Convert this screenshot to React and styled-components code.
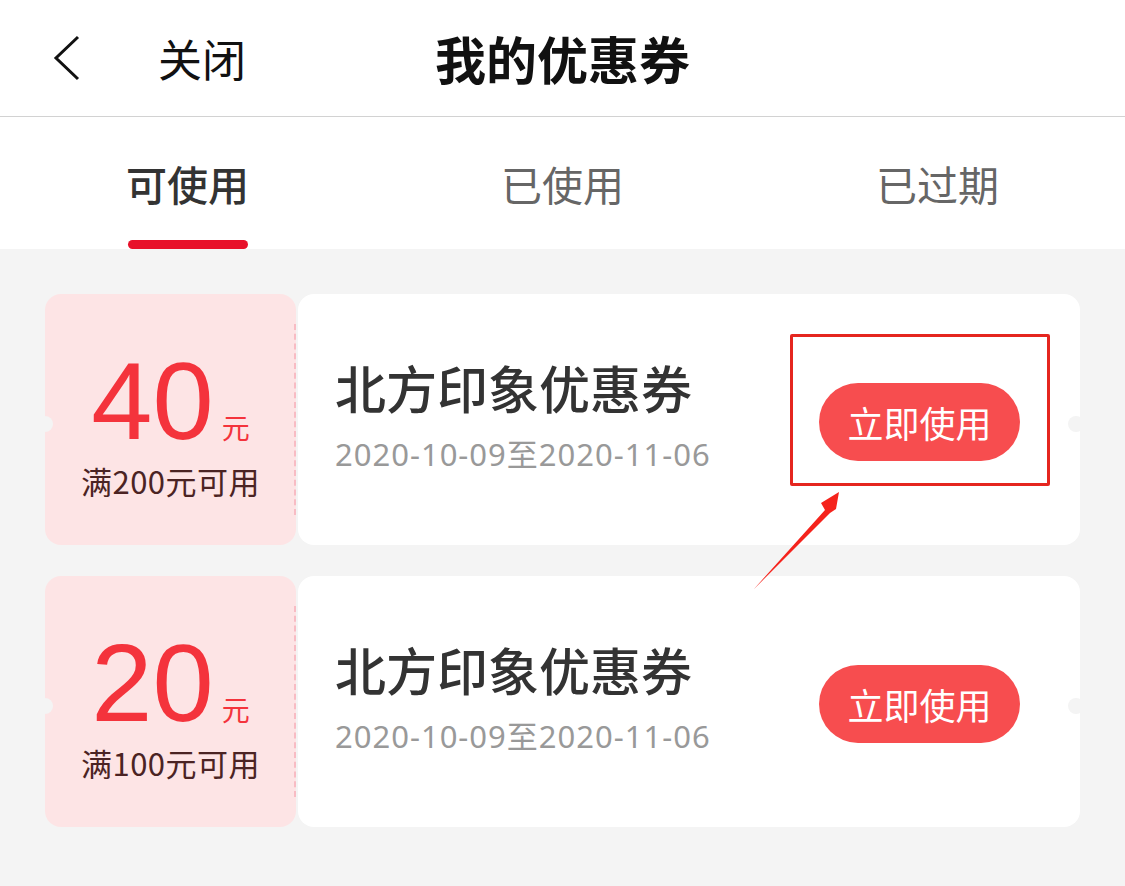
import React from "react";
import styled, { createGlobalStyle } from "styled-components";

const GlobalStyle = createGlobalStyle`
  html, body {
    margin: 0;
    padding: 0;
    background: #f4f4f4;
  }
  body {
    font-family: "Noto Sans CJK SC", "Noto Sans", sans-serif;
  }
`;

const Page = styled.div`
  width: 1125px;
  min-height: 886px;
  background: #f4f4f4;
`;

const Header = styled.div`
  height: 116px;
  display: grid;
  grid-template-columns: 1fr auto 1fr;
  align-items: center;
  background: #fff;
  border-bottom: 1px solid #d2d2d2;
`;

const HeaderLeft = styled.div`
  display: flex;
  align-items: center;
  padding-left: 52px;
  gap: 76px;
`;

const BackIcon = styled.svg`
  width: 30px;
  height: 50px;
  display: block;
`;

const CloseText = styled.span`
  font-size: 44px;
  color: #111;
  line-height: 1;
`;

const Title = styled.h1`
  margin: 0;
  font-size: 51px;
  font-weight: 700;
  color: #111;
  line-height: 1;
`;

const Tabs = styled.div`
  height: 132px;
  display: grid;
  grid-template-columns: repeat(3, 1fr);
  background: #fff;
`;

const Tab = styled.div`
  display: flex;
  flex-direction: column;
  align-items: center;
  justify-content: flex-end;
`;

const TabLabel = styled.span`
  font-size: 41px;
  line-height: 1;
  color: ${(p) => (p.$active ? "#333" : "#666")};
  font-weight: ${(p) => (p.$active ? 500 : 400)};
  margin-bottom: 36px;
`;

const Indicator = styled.div`
  width: 120px;
  height: 9px;
  border-radius: 5px;
  background: ${(p) => (p.$active ? "#e8112a" : "transparent")};
`;

const List = styled.div`
  padding: 45px 45px 40px;
  display: flex;
  flex-direction: column;
  gap: 31px;
`;

const Coupon = styled.div`
  position: relative;
  height: 251px;
  display: flex;
  gap: 2px;
`;

const Stub = styled.div`
  position: relative;
  width: 251px;
  flex-shrink: 0;
  background: #fde4e5;
  border-radius: 16px;
  display: flex;
  flex-direction: column;
  align-items: center;
  justify-content: center;
  padding-top: 3px;
  box-sizing: border-box;

  &::before {
    content: "";
    position: absolute;
    left: -8px;
    top: 50%;
    width: 16px;
    height: 16px;
    margin-top: -4px;
    border-radius: 50%;
    background: #f4f4f4;
  }

  &::after {
    content: "";
    position: absolute;
    right: 0;
    top: 30px;
    bottom: 30px;
    border-right: 2px dashed #f8bcc4;
  }
`;

const Amount = styled.div`
  display: flex;
  align-items: baseline;
  color: #f4333c;
  line-height: 1;
`;

const Value = styled.span`
  font-family: "Liberation Sans", "Noto Sans", sans-serif;
  font-size: 110px;
  line-height: 1;
`;

const Unit = styled.span`
  font-size: 28px;
  margin-left: 8px;
`;

const Condition = styled.div`
  font-size: 31px;
  letter-spacing: 0.5px;
  color: #4b2323;
  line-height: 1;
  margin-top: 9px;
`;

const Body = styled.div`
  position: relative;
  flex: 1;
  background: #fff;
  border-radius: 16px;
  display: flex;
  align-items: center;
  justify-content: space-between;
  padding: 0 60px 0 37px;

  &::before {
    content: "";
    position: absolute;
    right: -4px;
    top: 50%;
    width: 16px;
    height: 16px;
    margin-top: -4px;
    border-radius: 50%;
    background: #f4f4f4;
  }
`;

const Info = styled.div`
  display: flex;
  flex-direction: column;
  gap: 26px;
  padding-bottom: 8px;
`;

const CouponName = styled.div`
  font-size: 51px;
  font-weight: 500;
  color: #333;
  line-height: 1;
`;

const Dates = styled.div`
  font-family: "Noto Sans", "Noto Sans CJK SC", sans-serif;
  font-size: 31px;
  letter-spacing: 1px;
  color: #999;
  line-height: 1;
`;

const UseButton = styled.button`
  width: 201px;
  height: 78px;
  border: none;
  border-radius: 39px;
  background: #f74d4f;
  color: #fff;
  font-family: inherit;
  font-size: 36px;
  padding: 0;
  margin-top: 4px;
`;

const Highlight = styled.div`
  position: absolute;
  z-index: 2;
  left: 745px;
  top: 40px;
  width: 260px;
  height: 152px;
  border: 3px solid #e5261f;
  border-radius: 2px;
  box-sizing: border-box;
  pointer-events: none;
`;

const Pointer = styled.svg`
  position: absolute;
  z-index: 2;
  left: 700px;
  top: 190px;
  width: 110px;
  height: 120px;
  pointer-events: none;
`;

const coupons = [
  { value: 40, min: 200 },
  { value: 20, min: 100 },
];

export default function App() {
  return (
    <>
      <GlobalStyle />
      <Page>
        <Header>
          <HeaderLeft>
            <BackIcon viewBox="0 0 30 50">
              <polyline points="26,4 4,25 26,46" fill="none" stroke="#111" strokeWidth="3" />
            </BackIcon>
            <CloseText>关闭</CloseText>
          </HeaderLeft>
          <Title>我的优惠券</Title>
          <div />
        </Header>
        <Tabs>
          {["可使用", "已使用", "已过期"].map((t, i) => (
            <Tab key={t}>
              <TabLabel $active={i === 0}>{t}</TabLabel>
              <Indicator $active={i === 0} />
            </Tab>
          ))}
        </Tabs>
        <List>
          {coupons.map((c, i) => (
            <Coupon key={c.value}>
              <Stub>
                <Amount>
                  <Value>{c.value}</Value>
                  <Unit>元</Unit>
                </Amount>
                <Condition>满{c.min}元可用</Condition>
              </Stub>
              <Body>
                <Info>
                  <CouponName>北方印象优惠券</CouponName>
                  <Dates>2020-10-09至2020-11-06</Dates>
                </Info>
                <UseButton>立即使用</UseButton>
              </Body>
              {i === 0 && (
                <>
                  <Highlight />
                  <Pointer viewBox="700 190 110 120">
                    <polygon
                      points="709,295 780,216 776,209 794,198 791,215 785,219"
                      fill="#f5231c"
                    />
                  </Pointer>
                </>
              )}
            </Coupon>
          ))}
        </List>
      </Page>
    </>
  );
}
